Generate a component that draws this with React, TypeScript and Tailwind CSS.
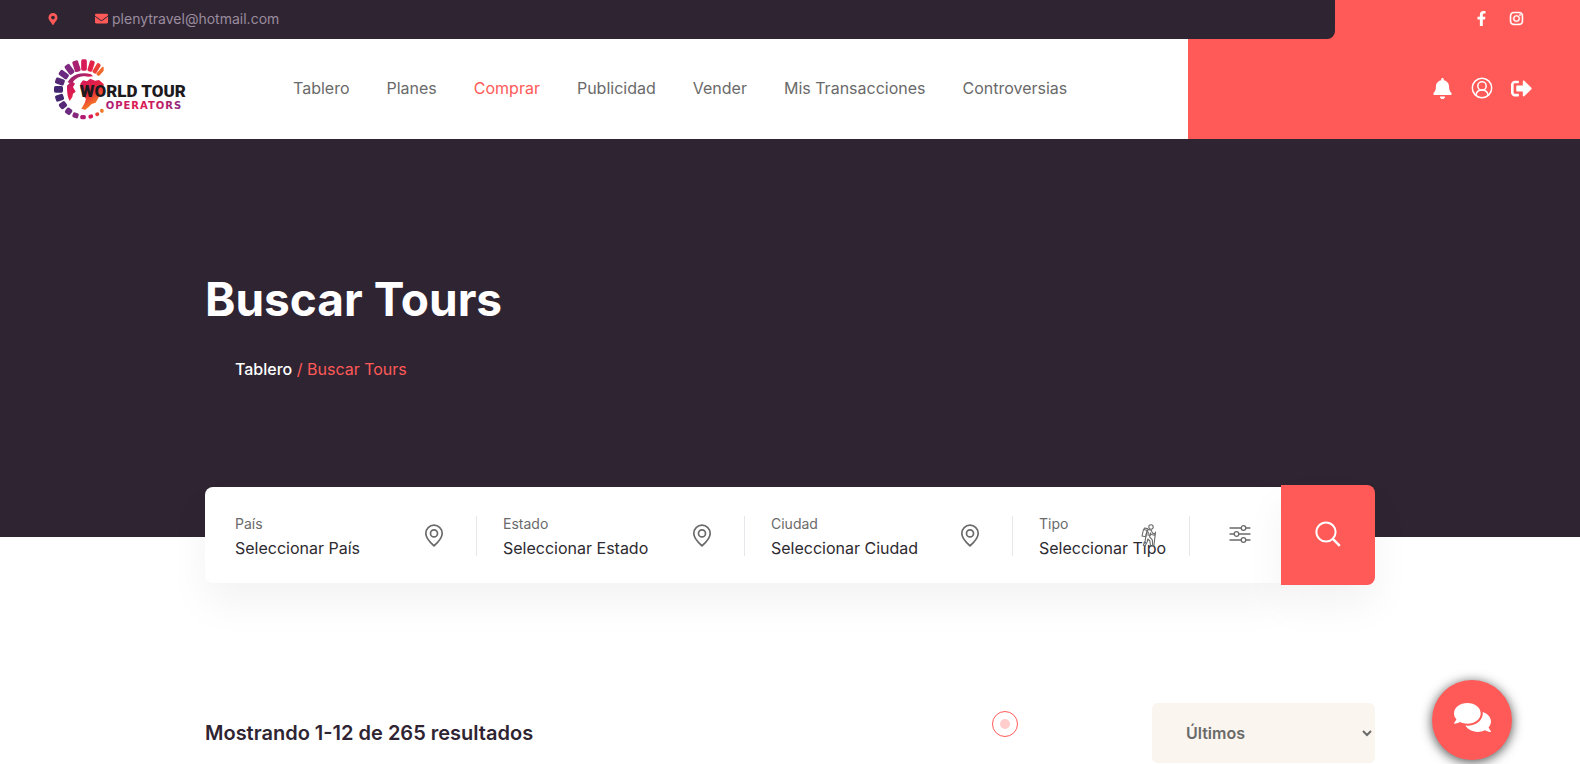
import { FaBell, FaComments, FaEnvelope, FaFacebookF, FaInstagram, FaMapMarkerAlt, FaSignOutAlt } from "react-icons/fa";

const menu = [
  { label: "Tablero", href: "#tablero" },
  { label: "Planes", href: "#planes" },
  { label: "Comprar", href: "#comprar", active: true },
  { label: "Publicidad", href: "#publicidad" },
  { label: "Vender", href: "#vender" },
  { label: "Mis Transacciones", href: "#transacciones" },
  { label: "Controversias", href: "#controversias" },
];

const places = [
  { id: "pais", label: "País", placeholder: "Seleccionar País" },
  { id: "estado", label: "Estado", placeholder: "Seleccionar Estado" },
  { id: "ciudad", label: "Ciudad", placeholder: "Seleccionar Ciudad" },
];

// angle in degrees, length and width of each feather in the logo ring
const feathers = [
  { a: -47, l: 32, w: 11 },
  { a: -59, l: 33, w: 13 },
  { a: -73, l: 34, w: 15 },
  { a: -90, l: 34, w: 17 },
  { a: -108, l: 34, w: 18 },
  { a: -126, l: 32, w: 18 },
  { a: -144, l: 30, w: 18 },
  { a: -162, l: 28, w: 19 },
  { a: 180, l: 27, w: 20 },
  { a: 161, l: 25, w: 19 },
  { a: 143, l: 22, w: 19 },
  { a: 125, l: 19, w: 19 },
  { a: 108, l: 16, w: 18 },
  { a: 92, l: 13, w: 17 },
  { a: 76, l: 12, w: 14 },
  { a: 62, l: 11, w: 12 },
  { a: 50, l: 12, w: 11 },
];

const ringColors = [
  "#f0692a", "#ea4038", "#e32048", "#d81a58", "#a8206f", "#7f2a80", "#6b2a7f", "#552876", "#43266f",
  "#43266f", "#582878", "#6b2a7f", "#86287c", "#b01c72", "#d81a58", "#ea4038", "#f0792a",
];

function Logo() {
  return (
    <svg viewBox="40 35 402 186" className="h-[62px] w-[134px]" role="img" aria-label="World Tour Operators">
      <defs>
        <linearGradient id="globe" gradientUnits="userSpaceOnUse" x1="85" y1="80" x2="150" y2="190">
          <stop offset="0" stopColor="#6b2a7f" />
          <stop offset="0.35" stopColor="#d81a58" />
          <stop offset="0.65" stopColor="#e8243f" />
          <stop offset="1" stopColor="#f58a1f" />
        </linearGradient>
        <linearGradient id="word" gradientUnits="userSpaceOnUse" x1="198" y1="0" x2="437" y2="0">
          <stop offset="0" stopColor="#a3217a" />
          <stop offset="0.4" stopColor="#e01a50" />
          <stop offset="0.7" stopColor="#c01c62" />
          <stop offset="1" stopColor="#7a2a86" />
        </linearGradient>
        <clipPath id="half">
          <rect x="40" y="35" width="152" height="190" />
        </clipPath>
      </defs>
      <g clipPath="url(#half)">
        {feathers.map((f, i) => (
          <rect
            key={f.a}
            x={223 - f.l}
            y={129 - f.w / 2}
            width={f.l}
            height={f.w}
            rx="5"
            fill={ringColors[i]}
            transform={`rotate(${f.a} 133 129)`}
          />
        ))}
      </g>
      <g fill="url(#globe)">
        <path d="M84 108q8-16 28-24 22-7 42 0l6 6q-14 2-24 0-12-2-22 4-12 6-18 18z" />
        <path d="M82 118l14-14 10 8-6 10 8 14-8 6-2 10-8 12q-9-16-8-46z" />
        <path d="M122 112l8-10 12 3 10-8 14 6 12-2 14 12v32l-14 6-10 18-12 4-8 8-12 10q-6-4-11-3l10-18 4-12-8-10 4-8-12-12z" />
      </g>
      <text x="120" y="153" fontSize="51" fill="#1d1a1e" className="font-['Roboto',sans-serif] font-black">
        WORLD TOUR
      </text>
      <text x="198" y="188" fontSize="30" fill="url(#word)" className="font-['DejaVu_Sans',sans-serif] font-bold tracking-widest">
        OPERATORS
      </text>
    </svg>
  );
}

function PinIcon() {
  return (
    <svg viewBox="0 0 20 24" className="h-6 w-5" fill="none" stroke="currentColor" strokeWidth="1.700">
      <path d="M10 21.800C7.500 19.500 1.800 14.500 1.800 9.400a8.200 8.200 0 0 1 16.400 0C18.200 14.500 12.500 19.500 10 21.800Z" strokeLinejoin="round" />
      <circle cx="10" cy="9.400" r="3.500" />
    </svg>
  );
}

function HikerIcon() {
  return (
    <svg viewBox="0 0 16 24" className="h-6 w-4" fill="none" stroke="currentColor" strokeWidth="1.100" strokeLinejoin="round" strokeLinecap="round">
      <circle cx="10" cy="3" r="2.200" />
      <path d="M2.500 5.500 6 6.200 4.800 12.800 1 12Z" />
      <path d="M3 5.200 3.500 4l3 .6M7 5.500l3.200.6 1.300 3 2.500.6-.3 1.500-3.500-.7-.8-1.600-.8 4 2.700 3 .5 6.100H9.500l-.6-5-2-2-.8 3-2 4.100-1.800-.8 1.800-4 .9-6.300Z" />
      <path d="M14.500 8 12.800 22.500M7.400 8.200 7 11l2.200.4" />
    </svg>
  );
}

function SlidersIcon() {
  return (
    <svg viewBox="0 0 22 18" className="h-[18px] w-[22px]" fill="none" stroke="currentColor" strokeWidth="1.300" strokeLinecap="round">
      <path d="M1 3h11M17 3h4M1 9h4M10 9h11M1 15h11M17 15h4" />
      <circle cx="14.500" cy="3" r="2.300" />
      <circle cx="7.500" cy="9" r="2.300" />
      <circle cx="14.500" cy="15" r="2.300" />
    </svg>
  );
}

function SearchIcon() {
  return (
    <svg viewBox="0 0 26 26" className="size-[26px]" fill="none" stroke="currentColor" strokeWidth="2">
      <circle cx="11" cy="11" r="9.600" />
      <path d="m17.800 17.800 7 7" strokeWidth="2.400" />
    </svg>
  );
}

function UserIcon() {
  return (
    <svg viewBox="0 0 22 22" className="size-[22px]" fill="none" stroke="currentColor" strokeWidth="1.500">
      <circle cx="11" cy="11" r="9.700" />
      <circle cx="11" cy="9" r="4.200" />
      <path d="M5 18.300c.3-3 2.600-5.200 6-5.200s5.700 2.200 6 5.200" />
    </svg>
  );
}

export default function App() {
  return (
    <div className="min-h-screen overflow-hidden bg-white font-['Inter',sans-serif] text-base text-[#6a6a6a]">
      <header>
        <div className="flex h-[39px] bg-[#ff5a57]">
          <div className="flex flex-1 items-center gap-9 rounded-br-lg bg-[#2f2432] pb-0.5 pl-[47px] text-sm">
            <FaMapMarkerAlt className="size-3 text-[#ff5a57]" />
            <a href="mailto:plenytravel@hotmail.com" className="flex items-center gap-1 text-[#9a8c9e]">
              <FaEnvelope className="size-[13px] text-[#ff5a57]" />
              plenytravel@hotmail.com
            </a>
          </div>
          <div className="flex w-[245px] items-center justify-end gap-5 pr-14 pb-0.5 text-white">
            <a href="#facebook" aria-label="Facebook">
              <FaFacebookF className="size-[15px]" />
            </a>
            <a href="#instagram" aria-label="Instagram">
              <FaInstagram className="size-[15px]" strokeWidth="14" />
            </a>
          </div>
        </div>
        <div className="flex h-[100px]">
          <div className="flex flex-1 items-center gap-[106px] pl-[53px]">
            <a href="#inicio">
              <Logo />
            </a>
            <nav className="flex gap-[37px] pb-0.5 whitespace-nowrap">
              {menu.map((item) => (
                <a key={item.label} href={item.href} className={item.active ? "text-[#ff5a57]" : ""}>
                  {item.label}
                </a>
              ))}
            </nav>
          </div>
          <div className="flex w-[392px] items-center justify-end gap-[18px] bg-[#ff5a57] pr-12 pb-0.5 text-white">
            <button type="button" aria-label="Notificaciones">
              <FaBell className="size-[21px]" />
            </button>
            <button type="button" aria-label="Mi cuenta">
              <UserIcon />
            </button>
            <button type="button" aria-label="Salir">
              <FaSignOutAlt className="size-[21px]" />
            </button>
          </div>
        </div>
      </header>

      <section className="h-[398px] bg-[#2f2432] pt-[130px]">
        <div className="mx-auto max-w-[1170px]">
          <h1 className="text-[46px] leading-[60px] font-bold text-white">Buscar Tours</h1>
          <nav className="mt-7 pl-[30px] leading-6 text-[#ff5a57]">
            <a href="#tablero" className="font-medium text-white">
              Tablero
            </a>{" "}
            / Buscar Tours
          </nav>
        </div>
      </section>

      <form className="relative mx-auto -mt-[52px] flex max-w-[1170px] items-center">
        <div className="flex h-24 flex-1 items-center rounded-l-lg bg-white pt-0.5 pl-[30px] shadow-[0_20px_40px_rgba(0,0,0,0.05)]">
          {places.map((place) => (
            <div key={place.id} className="mr-[26px] flex h-10 w-[242px] items-center border-r border-gray-200 pr-8">
              <div className="flex flex-1 flex-col">
                <label htmlFor={place.id} className="text-sm leading-6">
                  {place.label}
                </label>
                <select id={place.id} className="appearance-none leading-6 text-[#2d2a30]">
                  <option>{place.placeholder}</option>
                </select>
              </div>
              <PinIcon />
            </div>
          ))}
          <div className="relative flex h-10 w-[151px] flex-col justify-center border-r border-gray-200">
            <label htmlFor="tipo" className="text-sm leading-6">
              Tipo
            </label>
            <select id="tipo" className="appearance-none leading-6 text-[#2d2a30]">
              <option>Seleccionar Tipo</option>
            </select>
            <span className="pointer-events-none absolute top-2 right-8">
              <HikerIcon />
            </span>
          </div>
          <button type="button" aria-label="Filtros" className="flex flex-1 justify-center pb-1 pl-2">
            <SlidersIcon />
          </button>
        </div>
        <button type="submit" aria-label="Buscar" className="flex h-[100px] w-[94px] items-center justify-center rounded-r-lg bg-[#ff5a57] pb-0.5 text-white shadow-[0_20px_40px_rgba(0,0,0,0.05)]">
          <SearchIcon />
        </button>
      </form>

      <section className="mx-auto mt-[118px] flex max-w-[1170px] items-center justify-between">
        <h2 className="text-xl font-semibold text-[#2f2432]">Mostrando 1-12 de 265 resultados</h2>
        <select aria-label="Ordenar" className="h-[60px] w-[223px] rounded-md bg-[#faf5ee] pl-[30px] font-semibold text-[#6a6a6a]">
          <option>Últimos</option>
        </select>
      </section>

      <button
        type="button"
        aria-label="Chat"
        className="fixed right-[68px] bottom-1 flex size-20 items-center justify-center rounded-full bg-[#ff5a57] pb-1.5 text-white shadow-[0_2px_12px_rgba(0,0,0,0.7)]"
      >
        <FaComments className="size-[37px]" />
      </button>

      {/* custom pointer */}
      <div className="pointer-events-none fixed top-[711px] left-[992px] flex size-[26px] items-center justify-center rounded-full border border-[#ff5a57]">
        <div className="size-[10px] rounded-full bg-[#ffcdcc]" />
      </div>
    </div>
  );
}
